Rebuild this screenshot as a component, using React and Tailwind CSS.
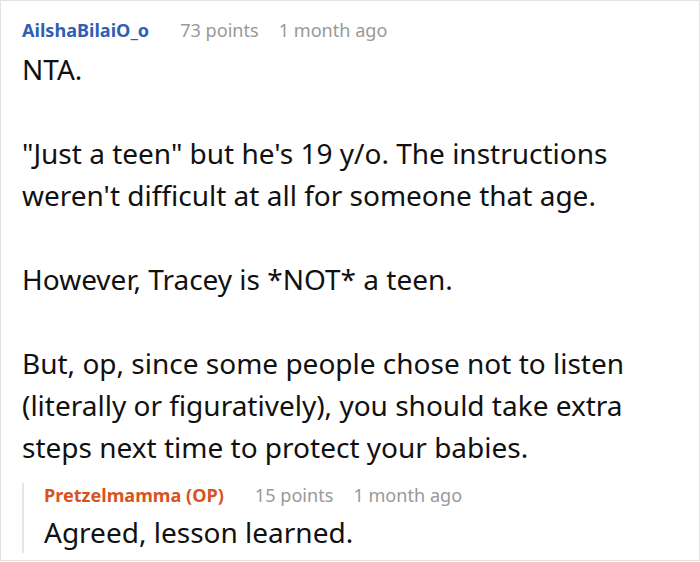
import React from 'react';

const paragraphs = [
  'NTA.',
  '"Just a teen" but he\'s 19 y/o. The instructions weren\'t difficult at all for someone that age.',
  'However, Tracey is *NOT* a teen.',
  'But, op, since some people chose not to listen (literally or figuratively), you should take extra steps next time to protect your babies.',
];

function Meta({ name, color, points, time }) {
  return (
    <div className="flex items-center text-[18.1px] leading-[24px]">
      <span className={`font-bold ${color}`}>{name}</span>
      <span className="ml-[31px] text-[#999999]">{points}</span>
      <span className="ml-[20px] text-[#999999]">{time}</span>
    </div>
  );
}

export default function App() {
  return (
    <div className="w-[700px] h-[562px] bg-white font-['Noto_Sans',sans-serif] text-[#111111]">
      <div className="h-[561px] border border-[#e2e2e2] pl-[21px] pr-4 pt-[17px] overflow-hidden">
        <Meta name="AilshaBilaiO_o" color="text-[#2f5fb3]" points="73 points" time="1 month ago" />
        <div className="mt-[6px] text-[28px] leading-[42px]">
          {paragraphs.map((p, i) => (
            <p key={i} className={i > 0 ? 'mt-[42px]' : ''}>{p}</p>
          ))}
        </div>
        <div className="mt-[15px] border-l-2 border-[#e6e6e6] pl-[20px]">
          <Meta name="Pretzelmamma (OP)" color="text-[#d9531e]" points="15 points" time="1 month ago" />
          <p className="mt-[4px] text-[28px] leading-[42px]">Agreed, lesson learned.</p>
        </div>
      </div>
    </div>
  );
}
